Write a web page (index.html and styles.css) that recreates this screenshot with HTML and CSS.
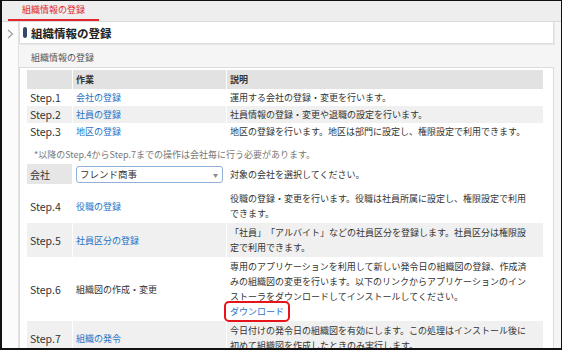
FILE: index.html
```html
<!DOCTYPE html>
<html lang="ja">
<head>
    <meta charset="UTF-8">
    <title>組織情報の登録</title>
    <link rel="stylesheet" href="styles.css">
</head>
<body>
    <div class="frame">
        <!-- Tab bar -->
        <div class="tabbar">
            <span class="tab">組織情報の登録</span>
        </div>

        <div class="body">
            <div class="side">
                <svg width="7" height="10" viewBox="0 0 7 10"><polyline points="1,1 5.5,5 1,9" fill="none" stroke="#9a9a9a" stroke-width="1.1"/></svg>
            </div>

            <div class="main">
                <div class="pagehead">
                    <span class="mark"></span>
                    <h1>組織情報の登録</h1>
                </div>
                <div class="subtitle">組織情報の登録</div>

                <div class="panel">
                    <table class="steps">
                        <tr class="head">
                            <th class="c1"></th>
                            <th class="c2">作業</th>
                            <th class="c3">説明</th>
                        </tr>
                        <tr>
                            <td class="step">Step.1</td>
                            <td><a href="#">会社の登録</a></td>
                            <td>運用する会社の登録・変更を行います。</td>
                        </tr>
                        <tr class="alt">
                            <td class="step">Step.2</td>
                            <td><a href="#">社員の登録</a></td>
                            <td>社員情報の登録・変更や退職の設定を行います。</td>
                        </tr>
                        <tr>
                            <td class="step">Step.3</td>
                            <td><a href="#">地区の登録</a></td>
                            <td>地区の登録を行います。地区は部門に設定し、権限設定で利用できます。</td>
                        </tr>
                    </table>

                    <p class="note">*以降のStep.4からStep.7までの操作は会社毎に行う必要があります。</p>

                    <table class="steps lower">
                        <tr class="company">
                            <td class="c1 label">会社</td>
                            <td class="c2">
                                <div class="select">
                                    <span>フレンド商事</span>
                                    <span class="arrow">▼</span>
                                </div>
                            </td>
                            <td class="c3">対象の会社を選択してください。</td>
                        </tr>
                        <tr class="first">
                            <td class="step">Step.4</td>
                            <td><a href="#">役職の登録</a></td>
                            <td>役職の登録・変更を行います。役職は社員所属に設定し、権限設定で利用できます。</td>
                        </tr>
                        <tr class="alt">
                            <td class="step">Step.5</td>
                            <td><a href="#">社員区分の登録</a></td>
                            <td>「社員」「アルバイト」などの社員区分を登録します。社員区分は権限設定で利用できます。</td>
                        </tr>
                        <tr>
                            <td class="step">Step.6</td>
                            <td>組織図の作成・変更</td>
                            <td>専用のアプリケーションを利用して新しい発令日の組織図の登録、作成済みの組織図の変更を行います。以下のリンクからアプリケーションのインストーラをダウンロードしてインストールしてください。<br><a href="#" class="download">ダウンロード</a></td>
                        </tr>
                        <tr class="alt">
                            <td class="step">Step.7</td>
                            <td><a href="#">組織の発令</a></td>
                            <td>今日付けの発令日の組織図を有効にします。この処理はインストール後に初めて組織図を作成したときのみ実行します。</td>
                        </tr>
                    </table>
                </div>
            </div>
        </div>
    </div>
</body>
</html>
```

FILE: styles.css
```css
/* Page */
body {
    margin: 0;
    font-family: "Noto Sans CJK JP", sans-serif;
    font-size: 9px;
    color: #333;
    text-spacing-trim: space-all;
}

.frame {
    width: 562px;
    height: 350px;
    box-sizing: border-box;
    border: 1px solid #111;
    border-left-width: 2px;
    border-bottom-width: 2px;
    overflow: hidden;
    display: flex;
    flex-direction: column;
    background: #f5f5f5;
}

/* Tab bar */
.tabbar {
    height: 20px;
    background: #eeeeee;
    border-bottom: 1px solid #d9d9d9;
    padding-left: 6px;
    display: flex;
}

.tab {
    padding: 0 14px;
    line-height: 18px;
    color: #e2262b;
    border-bottom: 2px solid #e2262b;
    font-size: 9px;
}

/* Body */
.body {
    flex: 1;
    display: flex;
    min-height: 0;
}

.side {
    width: 16px;
    background: #fbfbfb;
    border-right: 1px solid #e2e2e2;
    padding-top: 7px;
    display: flex;
    justify-content: center;
    align-items: flex-start;
}

.main {
    flex: 1;
    padding-right: 7px;
}

.pagehead {
    height: 21px;
    background: #fff;
    border: 1px solid #dedede;
    border-top: none;
    box-shadow: 1px 1px 0 #e8e8e8;
    display: flex;
    align-items: center;
    padding-left: 3px;
}

.mark {
    width: 4px;
    height: 11px;
    border-radius: 2px;
    background: #37476a;
    margin-right: 4px;
}

.pagehead h1 {
    margin: 0;
    font-size: 11.5px;
    font-weight: bold;
    color: #222;
}

.subtitle {
    margin: 7px 0 2px 12px;
    line-height: 14px;
    color: #555;
}

/* Panel */
.panel {
    background: #fff;
    border: 1px solid #dcdcdc;
    padding: 2px 9px 0 6px;
    height: 300px;
}

.steps {
    width: 517px;
    border-collapse: collapse;
    table-layout: fixed;
}

.steps td, .steps th {
    padding: 1px 3px;
    line-height: 15px;
    vertical-align: middle;
    text-align: left;
    border-left: 1px solid #fff;
}

.steps .c1 { width: 39px; }
.steps .c2 { width: 147px; }

.steps td:last-child, .steps th:last-child {
    padding-right: 12px;
}

.steps tr.head th {
    background: #e2e2e2;
    font-weight: bold;
    height: 17px;
    padding-top: 1px;
    padding-bottom: 1px;
}

.steps tr.alt td {
    background: #f0f0f0;
}

.step {
    font-size: 10.5px;
    color: #333;
}

.steps a {
    color: #1f73c6;
    text-decoration: none;
}

.note {
    margin: 8px 0 2px 8px;
    line-height: 14px;
    color: #777;
}

/* Lower table */
.lower tr.company td {
    height: 18px;
}

.lower td.label {
    background: #e6e6e6;
    font-size: 10px;
}

.select {
    height: 15px;
    border: 1px solid #8fb0d8;
    border-radius: 3px;
    display: flex;
    align-items: center;
    justify-content: space-between;
    padding: 0 4px 0 3px;
    font-size: 9.5px;
}

.select .arrow {
    font-size: 5px;
    color: #888;
}

.lower tr.first td {
    padding-top: 7px;
    padding-bottom: 2px;
}

.lower tr:not(.company):not(.first) td {
    padding-top: 2px;
    padding-bottom: 2px;
}

.download {
    display: inline-block;
    padding: 1px 4px;
    margin: -1px -4px;
    outline: 2px solid #e8141b;
    outline-offset: 0;
    border-radius: 3px;
}
```
